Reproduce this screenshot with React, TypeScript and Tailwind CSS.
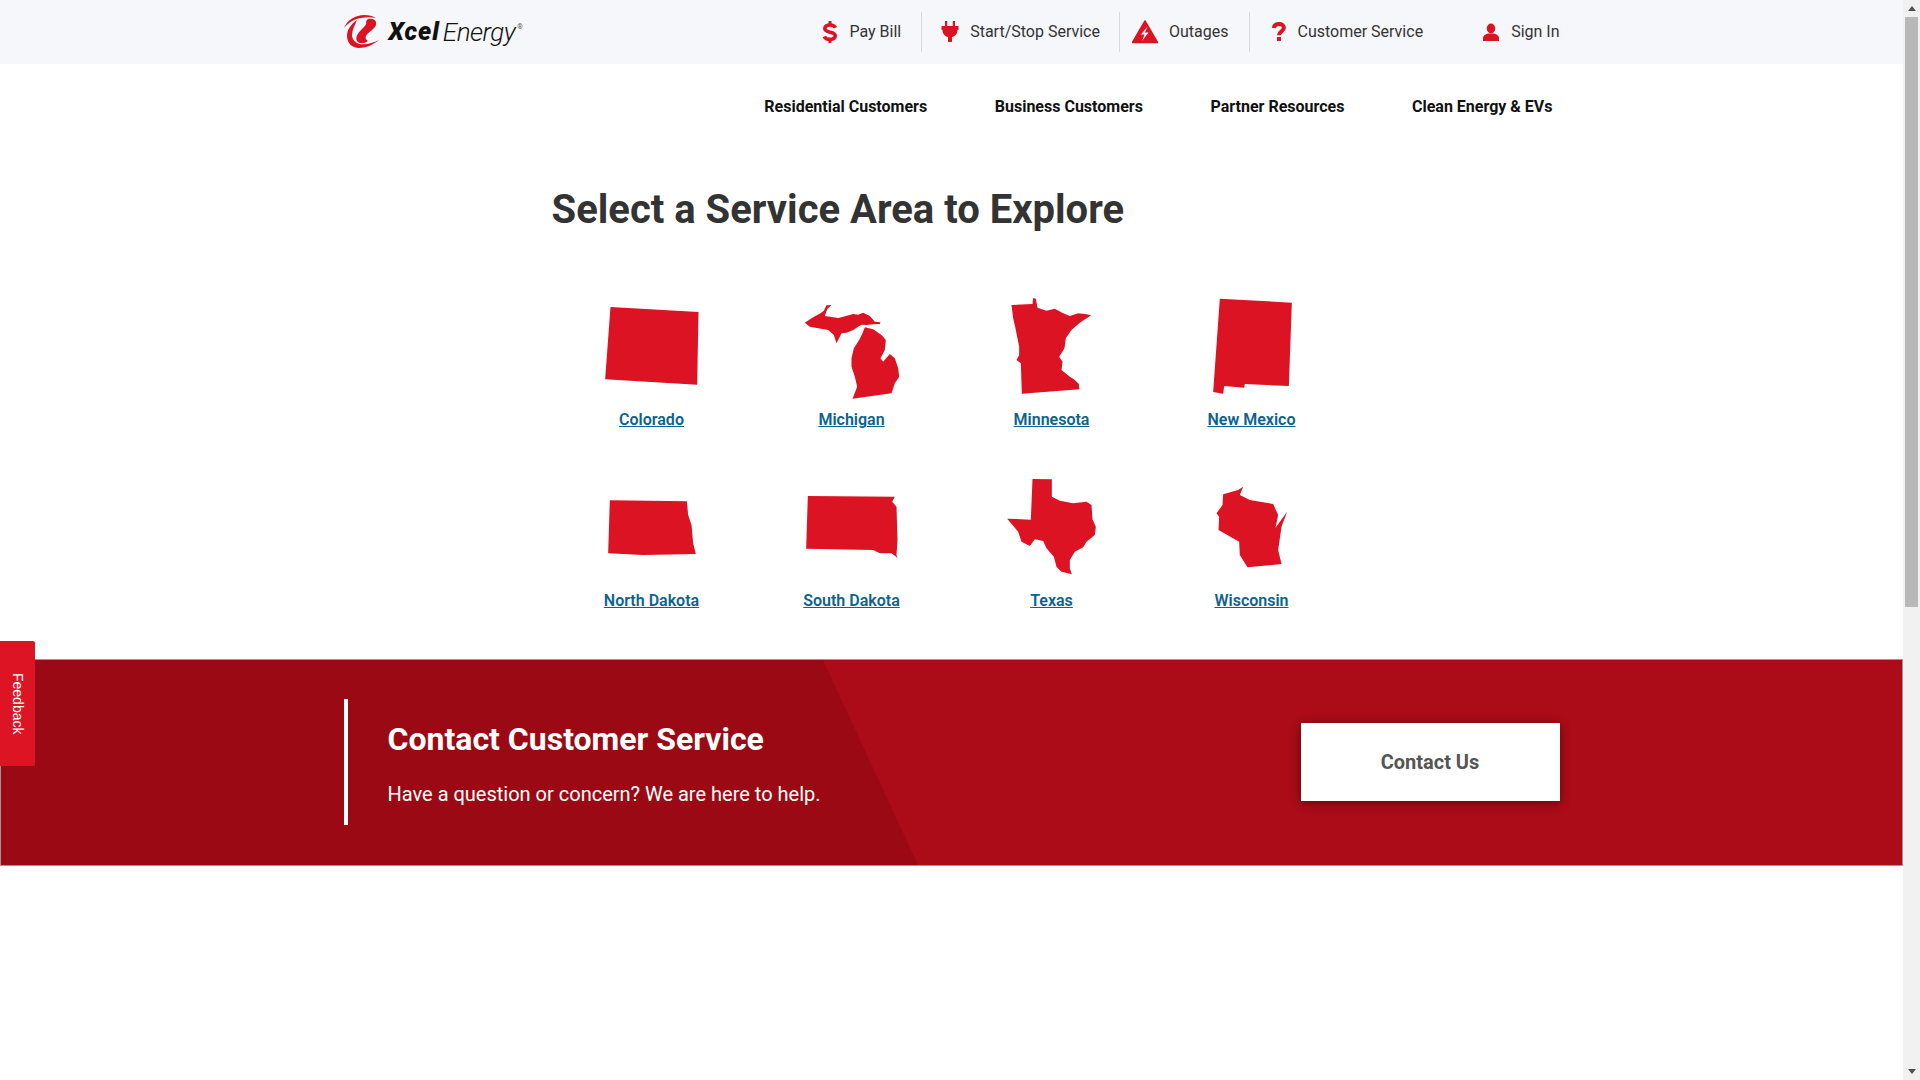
const red = "#db1322";

const topLinks = [
  { label: "Pay Bill", icon: "dollar", cls: "pl-[20px] pr-[20px]" },
  { label: "Start/Stop Service", icon: "plug", cls: "pl-[19px] pr-[19px]" },
  { label: "Outages", icon: "outage", cls: "pl-[12px] pr-[21px]" },
  { label: "Customer Service", icon: "question", cls: "pl-[22px] pr-[59px]" },
];

const mainLinks = ["Residential Customers", "Business Customers", "Partner Resources", "Clean Energy & EVs"];

// polygons traced from the reference, 3 units per pixel
const states = [
  { name: "Colorado", box: "66.5 45 300 300", shapes: ["92,81 356,96 352,314 76,298"] },
  {
    name: "Michigan",
    box: "666.5 45 300 300",
    shapes: [
      "675,128 700,112 722,100 732,92 740,76 755,75 742,88 735,108 760,112 775,114 790,110 820,102 835,104 850,98 870,108 885,125 902,127 900,132 880,133 860,135 845,134 835,140 820,150 800,158 785,160 780,170 770,190 762,165 745,150 715,145 690,140",
      "855,142 880,148 905,165 918,180 915,210 902,235 910,245 930,222 945,235 955,265 958,290 945,310 935,340 818,356 832,320 825,290 815,260 815,235 822,205 838,180 848,160",
    ],
  },
  {
    name: "Minnesota",
    box: "66.5 45 300 300",
    shapes: [
      "95,75 158,72 160,54 168,56 173,83 200,92 225,86 250,100 270,108 295,100 320,103 334,106 300,128 275,150 258,175 254,205 238,230 248,245 245,270 270,290 285,300 297,312 299,328 126,341 123,250 110,240 118,225 118,200 106,140 100,115",
    ],
  },
  { name: "New Mexico", box: "666.5 45 300 300", shapes: ["720,56 936,68 927,318 795,312 793,323 733,318 730,341 700,336"] },
  { name: "North Dakota", box: "66.5 48 300 300", shapes: ["90,121 321,124 325,165 335,195 340,250 348,282 190,285 85,280"] },
  {
    name: "South Dakota",
    box: "666.5 48 300 300",
    shapes: ["684,108 945,110 937,125 950,140 953,240 950,285 953,293 935,280 900,280 880,270 679,266"],
  },
  {
    name: "Texas",
    box: "66.5 48 300 300",
    shapes: [
      "158,57 216,58 216,110 240,122 280,130 320,125 335,135 338,178 348,200 345,225 320,245 310,262 285,275 270,300 270,325 276,343 245,335 230,320 222,290 200,265 190,243 165,238 150,258 125,245 115,215 82,176 153,179",
    ],
  },
  {
    name: "Wisconsin",
    box: "666.5 48 300 300",
    shapes: [
      "730,103 775,90 790,80 780,105 810,120 880,132 895,165 887,203 922,155 905,200 895,270 905,312 803,322 780,285 778,245 716,210 718,170 710,160 728,135",
    ],
  },
];

const TopIcon = ({ name }: { name: string }) => {
  if (name === "dollar") {
    return (
      <svg width="16" height="24" viewBox="0 0 16 24" fill="none" stroke={red} strokeWidth="3.600">
        <path d="M13.500 7.800C12.500 5.800 10.500 5 8 5 4.800 5 2.800 6.400 2.800 8.600c0 5 10.400 2.400 10.400 7.200 0 2.400-2.200 3.600-5.200 3.600-2.700 0-4.800-.9-5.800-3" />
        <path d="M8 1v4M8 19v4" strokeWidth="3" />
      </svg>
    );
  }
  if (name === "plug") {
    return (
      <svg width="18" height="22" viewBox="0 0 18 22" fill={red}>
        <path d="M4 0h2.200v5h5.600V0H14v5h3.500v4h-1c0 4-2.500 6.500-5.500 7V21H7v-5c-3-.5-5.500-3-5.500-7h-1V5H4z" />
      </svg>
    );
  }
  if (name === "outage") {
    return (
      <svg width="26" height="24" viewBox="0 0 26 24">
        <path d="M13 1 25.500 22.500H.5z" fill={red} stroke={red} strokeWidth="1.500" strokeLinejoin="round" />
        <path d="M15.500 6.500 9 14.500h3.500L10 21l6.500-8.500H13z" fill="#fff" />
      </svg>
    );
  }
  if (name === "question") {
    return (
      <svg width="14" height="20" viewBox="0 0 14 20" fill="none" stroke={red} strokeWidth="4">
        <path d="M1.800 6C2.200 3.200 4.300 2 7 2c2.900 0 4.900 1.500 4.900 3.800 0 3.500-4.900 3.700-4.900 7.400" />
        <path d="M7 15v4" />
      </svg>
    );
  }
  return (
    <svg width="18" height="20" viewBox="0 0 18 20" fill={red}>
      <ellipse cx="9" cy="6.500" rx="4.200" ry="5" />
      <path d="M1 19v-3c0-2.500 2-3.500 5-4.500h6c3 1 5 2 5 4.500v3z" />
    </svg>
  );
};

const App = () => {
  return (
    <div className="flex h-screen overflow-hidden bg-white font-['Roboto',sans-serif]">
      <div className="relative min-w-0 flex-1">
        {/* top utility bar */}
        <header className="h-[64px] bg-[#f6f7fb]">
          <div className="mx-auto flex h-full w-[1216px] items-center justify-between">
            <div className="flex items-center">
              <svg width="36" height="34" viewBox="0 0 36 34" className="mr-[9px]">
                <path d="M0 13C3 5 12 0 20 0c5 0 9 1 12 3-5-1-10-1-15 0C10 4 4 8 0 13z" fill={red} />
                <path d="M24 4c6-1 9 2 8 6-2 5-8 7-10 11-1 2 0 4 2 5-4 3-9 3-11 0-2-4 1-8 5-12 3-3 5-5 4-7 0-1 1-2 2-3z" fill={red} />
                <path d="M13 5C7 9 3 15 3 21c0 7 5 12 12 12 7 0 14-3 20-8-6 3-13 5-19 4-5-1-8-5-8-9 0-5 3-10 5-15z" fill={red} />
              </svg>
              <span className="text-[25px] font-black tracking-[0.9px] text-[#111] italic">Xcel</span>
              <span className="ml-[3px] text-[26px] font-light tracking-[-0.5px] text-[#111] italic">Energy</span>
              <span className="mb-[10px] ml-[2px] text-[7px] text-[#555]">®</span>
            </div>
            <nav className="flex items-center text-[16px] text-[#333]">
              {topLinks.map((link, i) => (
                <a
                  key={link.label}
                  className={`flex h-[40px] items-center gap-[11px] ${link.cls} ${i < 3 ? "border-r border-[#d9dade]" : ""}`}
                >
                  <span className="flex items-center justify-center"><TopIcon name={link.icon} /></span>
                  {link.label}
                </a>
              ))}
              <a className="flex h-[40px] items-center gap-[11px]">
                <TopIcon name="user" />
                Sign In
              </a>
            </nav>
          </div>
        </header>

        {/* main nav */}
        <nav className="mx-auto flex h-[86px] w-[1216px] items-center justify-end gap-[67.6px] pr-[7px] text-[16px] font-bold text-[#111]">
          {mainLinks.map((l) => (
            <a key={l}>{l}</a>
          ))}
        </nav>

        <main className="mx-auto w-[1216px] pl-[208px]">
          <h1 className="mt-[36px] text-[40px] leading-[48px] font-bold text-[#333]">Select a Service Area to Explore</h1>
          <div className="mt-[61px] grid w-[800px] grid-cols-4 gap-y-[44px]">
            {states.map((s) => (
              <div key={s.name} className="flex flex-col items-center">
                <svg width="100" height="100" viewBox={s.box} fill={red} className="overflow-visible">
                  {s.shapes.map((p) => (
                    <polygon key={p} points={p} />
                  ))}
                </svg>
                <a className="mt-[13px] text-[16px] leading-[24px] font-semibold text-[#0b6390] underline">{s.name}</a>
              </div>
            ))}
          </div>
        </main>

        {/* contact banner */}
        <section className="relative mt-[46px] h-[207px] overflow-hidden border border-[#999] bg-[#ab0c18]">
          <svg className="absolute top-0 left-0 h-full w-[920px]" viewBox="0 0 920 205" preserveAspectRatio="none">
            <polygon points="0,0 822,0 917,205 0,205" fill="#9b0a14" />
          </svg>
          <div className="relative mx-auto flex h-full w-[1216px] items-center justify-between pb-[2px]">
            <div className="border-l-[4px] border-white pl-[40px] text-white">
              <div className="flex h-[126px] flex-col pt-[20px]">
                <h2 className="text-[32px] leading-[40px] font-bold">Contact Customer Service</h2>
                <p className="mt-[20px] text-[20px] leading-[30px]">Have a question or concern? We are here to help.</p>
              </div>
            </div>
            <a className="flex h-[78px] w-[259px] items-center justify-center bg-white text-[20px] font-bold text-[#555] shadow-[0_2px_10px_rgba(0,0,0,0.45)]">
              Contact Us
            </a>
          </div>
        </section>

        <div className="absolute top-[641px] left-0 flex h-[125px] w-[35px] items-center justify-center rounded-r-[2px] bg-[#dc1423]">
          <span className="font-['Liberation_Sans',sans-serif] text-[14px] text-white [writing-mode:vertical-rl]">Feedback</span>
        </div>
      </div>

      {/* scrollbar */}
      <aside className="flex w-[17px] shrink-0 flex-col items-center bg-[#f1f1f1]">
        <div className="flex h-[17px] items-center justify-center">
          <div className="h-0 w-0 border-x-[4px] border-b-[5px] border-x-transparent border-b-[#505050]" />
        </div>
        <div className="h-[590px] w-[13px] bg-[#b8b8b8]" />
        <div className="flex-1" />
        <div className="flex h-[17px] items-center justify-center">
          <div className="h-0 w-0 border-x-[4px] border-t-[5px] border-x-transparent border-t-[#505050]" />
        </div>
      </aside>
    </div>
  );
};

export default App;
